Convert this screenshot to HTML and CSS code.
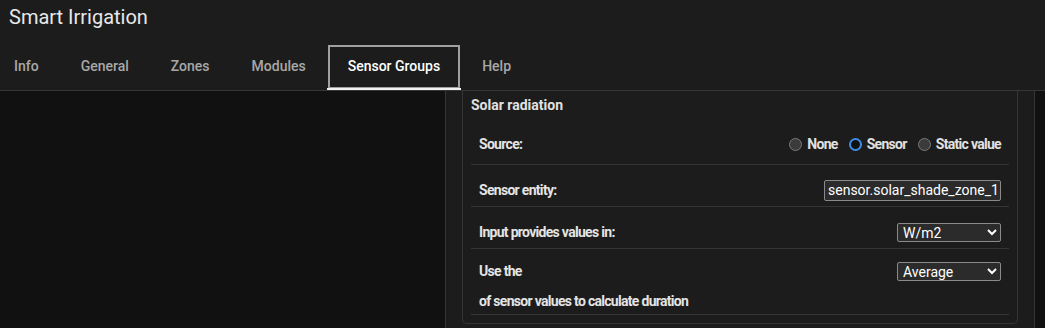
FILE: index.html
```html
<!DOCTYPE html>
<html lang="en">
<head>
  <meta charset="UTF-8" />
  <meta name="viewport" content="width=device-width, initial-scale=1.0"/>
  <title>Smart Irrigation</title>
  <link rel="stylesheet" href="styles.css">
</head>
<body>
  <header class="topbar">
    <div class="title">Smart Irrigation</div>
    <nav class="tabs">
      <a class="tab">Info</a>
      <a class="tab">General</a>
      <a class="tab">Zones</a>
      <a class="tab">Modules</a>
      <a class="tab active">Sensor Groups</a>
      <a class="tab">Help</a>
    </nav>
  </header>

  <main class="layout">
    <div class="side"></div>
    <section class="panel">
      <div class="card">
        <div class="card-title">Solar radiation</div>

        <div class="row first">
          <span class="label">Source:</span>
          <div class="radios">
            <label><input type="radio" name="src"> None</label>
            <label><input type="radio" name="src" checked> Sensor</label>
            <label><input type="radio" name="src"> Static value</label>
          </div>
        </div>

        <div class="row">
          <span class="label">Sensor entity:</span>
          <input class="field" type="text" value="sensor.solar_shade_zone_1">
        </div>

        <div class="row">
          <span class="label">Input provides values in:</span>
          <select class="pick">
            <option>W/m2</option>
          </select>
        </div>

        <div class="row multi">
          <div class="line">
            <span class="label">Use the</span>
            <select class="pick">
              <option>Average</option>
            </select>
          </div>
          <div class="line">
            <span class="label">of sensor values to calculate duration</span>
          </div>
        </div>
      </div>
    </section>
    <div class="side right"></div>
  </main>
</body>
</html>
```

FILE: styles.css
```css
html, body {
  margin: 0;
  height: 100%;
}
body {
  background: #111111;
  color: #e1e1e1;
  font-family: Roboto, "Liberation Sans", sans-serif;
  overflow: hidden;
}
.topbar {
  background: #1c1c1c;
  border-bottom: 1px solid #353535;
}
.title {
  height: 44px;
  padding-left: 9px;
  font-size: 20px;
  line-height: 34px;
  color: #e8e8e8;
}
.tabs {
  display: flex;
  margin-left: -7px;
}
.tab {
  position: relative;
  height: 46px;
  line-height: 44px;
  padding: 0 21px;
  font-size: 14px;
  font-weight: 500;
  color: #a8a8a8;
}
.tab.active {
  color: #ffffff;
  outline: 2px solid #a0a0a0;
  outline-offset: -3px;
}
.tab.active::after {
  content: "";
  position: absolute;
  left: 0;
  right: 0;
  bottom: 0;
  height: 2px;
  background: #f2f2f2;
}
.layout {
  display: flex;
  height: 240px;
}
.side {
  flex: 1;
  background: #111111;
}
.side.right {
  flex: 0 0 10px;
}
.panel {
  flex: 0 0 590px;
  box-sizing: border-box;
  background: #1c1c1c;
  border-left: 1px solid #353535;
  border-right: 1px solid #353535;
  padding: 0 16px;
}
.card {
  border: 1px solid #353535;
  border-top: none;
  border-radius: 0 0 5px 5px;
  padding: 0 8px 8px 8px;
  font-size: 14px;
  font-weight: 700;
  letter-spacing: -0.7px;
}
.card-title {
  font-size: 14px;
  font-weight: 700;
  letter-spacing: 0;
  padding-top: 4px;
  line-height: 20px;
}
.row {
  display: flex;
  align-items: center;
  justify-content: space-between;
  height: 22px;
  padding: 14px 8px 5px 8px;
  border-bottom: 1px solid #353535;
}
.row.first {
  padding: 18px 8px 9px 8px;
}
.row.multi {
  display: block;
  height: auto;
  padding: 12px 8px 3px 8px;
}
.line {
  display: flex;
  align-items: center;
  justify-content: space-between;
  height: 20px;
}
.line + .line {
  margin-top: 10px;
}
.label {
  color: #e4e4e4;
}
.radios {
  display: flex;
  gap: 11px;
}
.radios label {
  display: flex;
  align-items: center;
  gap: 5px;
}
.radios input {
  appearance: none;
  margin: 0;
  width: 13px;
  height: 13px;
  border-radius: 50%;
  border: 1px solid #7a7a7a;
  background: #3b3b3b;
}
.radios input:checked {
  border: 2px solid #3b8ee8;
  background: #111111;
}
.field {
  width: 177px;
  height: 21px;
  box-sizing: border-box;
  padding: 0 3px;
  background: #2b2b2b;
  color: #ffffff;
  border: 1px solid #8a8a8a;
  border-radius: 2px;
  font-family: Roboto, "Liberation Sans", sans-serif;
  font-size: 14px;
  font-weight: 400;
  letter-spacing: 0;
}
.pick {
  width: 104px;
  height: 19px;
  box-sizing: border-box;
  padding: 0 1px;
  background: #2b2b2b;
  color: #ffffff;
  border: 1px solid #8a8a8a;
  border-radius: 2px;
  font-family: Roboto, "Liberation Sans", sans-serif;
  font-size: 14px;
  font-weight: 400;
  letter-spacing: 0;
  color-scheme: dark;
}
```
